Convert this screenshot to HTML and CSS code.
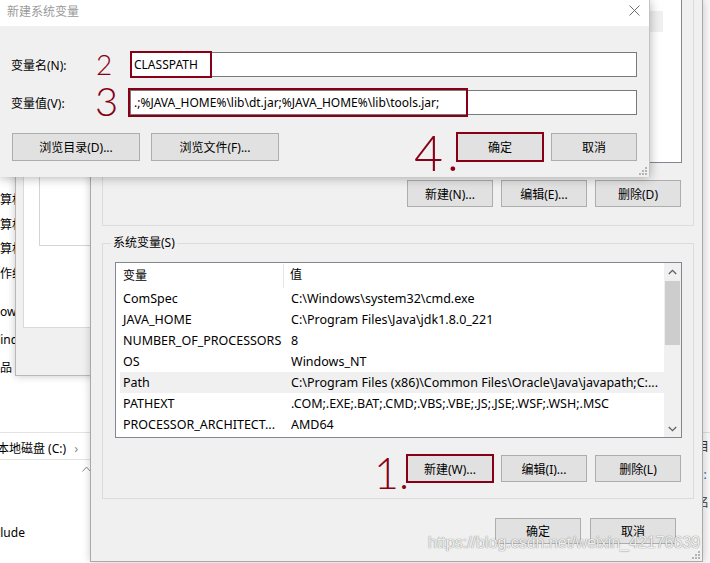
FILE: index.html
```html
<!DOCTYPE html>
<html lang="zh-CN">
<head>
    <meta charset="UTF-8">
    <meta name="viewport" content="width=device-width, initial-scale=1.0">
    <title>新建系统变量</title>
    <link rel="stylesheet" href="styles.css">
</head>
<body>
<div class="desktop">

    <!-- 最底层：系统信息 / 资源管理器 -->
    <div class="win explorer">
        <div class="info">
            <div class="info-row">计算机名:</div>
            <div class="info-row">计算机全名:</div>
            <div class="info-row">计算机描述:</div>
            <div class="info-row">工作组:</div>
        </div>
        <div class="info info-os">
            <div class="info-row cut-wind">Windows 10 家庭中文版</div>
            <div class="info-row cut-w">Windows 已激活</div>
            <div class="info-row">产品 ID:</div>
        </div>
        <div class="crumb">
            <span class="crumb-text">本地磁盘 (C:)</span>
            <span class="crumb-arrow">›</span>
        </div>
        <div class="sort-up">
            <svg width="9" height="6" viewBox="0 0 9 6"><polyline points="0.5,5.5 4.5,1 8.5,5.5" fill="none" stroke="#8a8a8a" stroke-width="1"/></svg>
        </div>
        <div class="file-row">include</div>
    </div>

    <!-- 系统属性 -->
    <div class="win sysprop">
        <div class="sp-panel">
            <div class="sp-box"></div>
        </div>
    </div>

    <!-- 右侧露出的窗口 -->
    <div class="win side">
        <div class="side-line side-top"></div>
        <div class="side-text">目</div>
        <div class="side-text side-blue">|:</div>
        <div class="side-text">名</div>
    </div>

    <!-- 环境变量 -->
    <div class="win envvars">
        <div class="group group-user">
            <div class="list list-user">
                <div class="list-body">
                    <div class="row selected"><span class="cell-name">Path</span><span class="cell-value">%USERPROFILE%\AppData\Local\Microsoft\WindowsApps;</span></div>
                    <div class="row"><span class="cell-name">TEMP</span><span class="cell-value">%USERPROFILE%\AppData\Local\Temp</span></div>
                    <div class="row"><span class="cell-name">TMP</span><span class="cell-value">%USERPROFILE%\AppData\Local\Temp</span></div>
                </div>
            </div>
            <div class="btn-row">
                <button class="btn">新建(N)...</button>
                <button class="btn">编辑(E)...</button>
                <button class="btn">删除(D)</button>
            </div>
        </div>

        <div class="group group-sys">
            <span class="group-title">系统变量(S)</span>
            <div class="list list-sys">
                <div class="list-body">
                    <div class="list-head">
                        <span class="head-name">变量</span>
                        <span class="head-value">值</span>
                    </div>
                    <div class="row"><span class="cell-name">ComSpec</span><span class="cell-value">C:\Windows\system32\cmd.exe</span></div>
                    <div class="row"><span class="cell-name">JAVA_HOME</span><span class="cell-value">C:\Program Files\Java\jdk1.8.0_221</span></div>
                    <div class="row"><span class="cell-name">NUMBER_OF_PROCESSORS</span><span class="cell-value">8</span></div>
                    <div class="row"><span class="cell-name">OS</span><span class="cell-value">Windows_NT</span></div>
                    <div class="row selected"><span class="cell-name">Path</span><span class="cell-value">C:\Program Files (x86)\Common Files\Oracle\Java\javapath;C:...</span></div>
                    <div class="row"><span class="cell-name">PATHEXT</span><span class="cell-value">.COM;.EXE;.BAT;.CMD;.VBS;.VBE;.JS;.JSE;.WSF;.WSH;.MSC</span></div>
                    <div class="row"><span class="cell-name">PROCESSOR_ARCHITECT...</span><span class="cell-value">AMD64</span></div>
                </div>
                <div class="scrollbar">
                    <div class="sb-btn">
                        <svg width="9" height="6" viewBox="0 0 9 6"><polyline points="0.8,5 4.5,1.3 8.2,5" fill="none" stroke="#606060" stroke-width="1.3"/></svg>
                    </div>
                    <div class="sb-track"><div class="sb-thumb"></div></div>
                    <div class="sb-btn">
                        <svg width="9" height="6" viewBox="0 0 9 6"><polyline points="0.8,1 4.5,4.7 8.2,1" fill="none" stroke="#606060" stroke-width="1.3"/></svg>
                    </div>
                </div>
            </div>
            <div class="btn-row">
                <button class="btn marked">新建(W)...</button>
                <button class="btn">编辑(I)...</button>
                <button class="btn">删除(L)</button>
            </div>
        </div>

        <div class="footer-row">
            <button class="btn btn-footer">确定</button>
            <button class="btn btn-footer">取消</button>
        </div>
        <div class="grip grip-env">
            <svg width="8" height="8" viewBox="0 0 8 8" fill="#b4b4b4"><rect x="6" y="0" width="2" height="2"/><rect x="3" y="3" width="2" height="2"/><rect x="6" y="3" width="2" height="2"/><rect x="0" y="6" width="2" height="2"/><rect x="3" y="6" width="2" height="2"/><rect x="6" y="6" width="2" height="2"/></svg>
        </div>
    </div>

    <!-- 新建系统变量 -->
    <div class="win dialog">
        <div class="titlebar">
            <span class="title">新建系统变量</span>
            <svg class="close" width="11" height="11" viewBox="0 0 11 11"><path d="M0.5 0.5 L10.5 10.5 M10.5 0.5 L0.5 10.5" stroke="#6b6b6b" stroke-width="1"/></svg>
        </div>
        <div class="dialog-body">
            <div class="field">
                <label class="field-label">变量名(N):</label>
                <div class="input">CLASSPATH</div>
            </div>
            <div class="field">
                <label class="field-label">变量值(V):</label>
                <div class="input">.;%JAVA_HOME%\lib\dt.jar;%JAVA_HOME%\lib\tools.jar;</div>
            </div>
            <div class="dialog-buttons">
                <button class="btn btn-browse">浏览目录(D)...</button>
                <button class="btn btn-browse">浏览文件(F)...</button>
                <button class="btn btn-dlg marked ok">确定</button>
                <button class="btn btn-dlg">取消</button>
            </div>
        </div>
        <div class="grip grip-dlg">
            <svg width="8" height="8" viewBox="0 0 8 8" fill="#b4b4b4"><rect x="6" y="0" width="2" height="2"/><rect x="3" y="3" width="2" height="2"/><rect x="6" y="3" width="2" height="2"/><rect x="0" y="6" width="2" height="2"/><rect x="3" y="6" width="2" height="2"/><rect x="6" y="6" width="2" height="2"/></svg>
        </div>
    </div>

    <!-- 红色标注 -->
    <div class="anno-box anno-name"></div>
    <div class="anno-box anno-value"></div>
    <div class="anno anno-2">2</div>
    <div class="anno anno-3">3</div>
    <div class="anno anno-4">4.</div>
    <div class="anno anno-1">1.</div>

    <div class="watermark">https://blog.csdn.net/weixin_42176639</div>
</div>
</body>
</html>
```

FILE: styles.css
```css
* {
    box-sizing: border-box;
}
body {
    margin: 0;
    font-family: "Noto Sans", "Noto Sans CJK SC", sans-serif;
    font-size: 12px;
    color: #000;
}
.desktop {
    position: relative;
    width: 710px;
    height: 563px;
    overflow: hidden;
    background: #fff;
}
.win {
    position: absolute;
}

/* 底层窗口 */
.explorer {
    left: 0;
    top: 0;
    width: 120px;
    height: 563px;
    background: #fff;
}
.info {
    padding-top: 188px;
}
.info-row {
    height: 24.5px;
    line-height: 24.5px;
    white-space: nowrap;
    margin-left: -12px;
}
.info-os {
    padding-top: 12px;
}
.info-os .info-row {
    height: 28px;
    line-height: 28px;
}
.info-row.cut-wind {
    margin-left: -29px;
}
.info-row.cut-w {
    margin-left: -11px;
}
.crumb {
    margin-top: 50px;
    height: 28px;
    width: 95px;
    border-top: 1px solid #e3e3e3;
    border-bottom: 1px solid #e3e3e3;
    display: flex;
    align-items: center;
    padding-top: 3px;
    white-space: nowrap;
}
.crumb-text {
    margin-left: -3px;
}
.crumb-arrow {
    margin-left: 8px;
    color: #8a8a8a;
    font-size: 13px;
}
.sort-up {
    margin: 6px 0 0 82px;
    height: 6px;
    line-height: 0;
}
.file-row {
    margin: 52px 0 0 -16px;
    white-space: nowrap;
}

.sysprop {
    left: 15px;
    top: 0;
    width: 110px;
    height: 376px;
    background: #f0f0f0;
    border: 1px solid #b8b8b8;
    box-shadow: 0 0 8px rgba(0, 0, 0, 0.22);
}
.sp-panel {
    margin-left: 7px;
    height: 327px;
    background: #fff;
    border-left: 1px solid #dadada;
    border-bottom: 1px solid #dadada;
}
.sp-box {
    margin-left: 15px;
    height: 245px;
    border-left: 1px solid #d4d4d4;
    border-bottom: 1px solid #d4d4d4;
}

.side {
    left: 703px;
    top: 0;
    width: 20px;
    height: 563px;
    background: #f7f7f7;
    padding-top: 432px;
}
.side-top {
    height: 1px;
    background: #dcdcdc;
}
.side-text {
    height: 28px;
    line-height: 28px;
    margin-left: -6px;
    color: #333;
    white-space: nowrap;
}
.side-blue {
    color: #2a5db0;
}

/* 环境变量窗口 */
.envvars {
    left: 90px;
    top: 0;
    width: 613px;
    height: 562px;
    background: #f0f0f0;
    border: 1px solid #a9a9a9;
    border-top: 0;
    box-shadow: 0 0 8px rgba(0, 0, 0, 0.2);
    padding: 0 8px 0 11px;
}
.group {
    position: relative;
    border: 1px solid #dcdcdc;
}
.group-user {
    border-top: 0;
    padding: 0 11px 18px 12px;
}
.group-sys {
    margin-top: 17px;
    padding: 18px 11px 16px 12px;
}
.group-title {
    position: absolute;
    top: -8px;
    left: 8px;
    padding: 0 2px;
    line-height: 14px;
    background: #f0f0f0;
}
.list {
    display: flex;
    background: #fff;
    border: 1px solid #828790;
}
.list-user {
    height: 163px;
    border-top: 0;
    padding: 11px 18px 0 0;
}
.list-sys {
    height: 176px;
}
.list-body {
    flex: 1;
    min-width: 0;
}
.list-head {
    display: flex;
    height: 25px;
    line-height: 24px;
}
.head-name {
    width: 168px;
    padding-left: 7px;
    border-right: 1px solid #e5e5e5;
    margin: 1px 0 0;
}
.head-value {
    padding-left: 6px;
}
.row {
    display: flex;
    height: 21px;
    line-height: 21px;
    margin-left: 4px;
    font-size: 12.5px;
    white-space: nowrap;
}
.row.selected {
    background: #f0f0f0;
}
.cell-name {
    width: 171px;
    flex: none;
    padding-left: 3px;
    overflow: hidden;
}
.cell-value {
    flex: 1;
    overflow: hidden;
}
.scrollbar {
    width: 17px;
    flex: none;
    display: flex;
    flex-direction: column;
    background: #f0f0f0;
}
.sb-btn {
    height: 17px;
    display: flex;
    align-items: center;
    justify-content: center;
}
.sb-track {
    flex: 1;
}
.sb-thumb {
    margin: 1px 1px 0;
    height: 64px;
    background: #cdcdcd;
}
.btn-row {
    display: flex;
    justify-content: flex-end;
    gap: 8px;
    margin-top: 17px;
    padding-right: 1px;
}
.btn {
    width: 86px;
    height: 27px;
    padding: 0;
    border: 1px solid #adadad;
    background: #e1e1e1;
    font-family: inherit;
    font-size: 12px;
    color: #000;
}
.btn.marked {
    outline: 2px solid #880015;
    outline-offset: -1px;
}
.footer-row {
    display: flex;
    justify-content: flex-end;
    gap: 9px;
    margin-top: 19px;
    padding-right: 18px;
}
.btn-footer {
    height: 26px;
}
.grip {
    position: absolute;
    right: 2px;
    bottom: 2px;
    line-height: 0;
}

/* 新建系统变量对话框 */
.dialog {
    left: 0;
    top: 0;
    width: 650px;
    height: 177px;
    background: #f0f0f0;
    border-right: 1px solid #c4c4c4;
    box-shadow: 0 1px 10px rgba(0, 0, 0, 0.3);
}
.titlebar {
    height: 26px;
    background: #fff;
    display: flex;
    justify-content: space-between;
    align-items: center;
    padding: 0 9px 5px 7px;
}
.title {
    color: #9a9a9a;
}
.dialog-body {
    padding: 26px 12px 0 11px;
}
.field {
    display: flex;
    align-items: center;
}
.field + .field {
    margin-top: 13px;
}
.field-label {
    width: 119px;
    flex: none;
}
.input {
    flex: 1;
    height: 25px;
    line-height: 23px;
    padding-left: 3px;
    background: #fff;
    border: 1px solid #7a7a7a;
    white-space: nowrap;
    overflow: hidden;
}
.dialog-buttons {
    display: flex;
    gap: 11px;
    margin-top: 18px;
    padding-left: 1px;
}
.btn-browse {
    width: 128px;
    height: 28px;
}
.btn-dlg {
    height: 28px;
}
.btn-dlg.ok {
    margin-left: auto;
    margin-right: -3px;
}

/* 标注 */
.anno-box {
    position: absolute;
    border: 2px solid #880015;
}
.anno-name {
    left: 130px;
    top: 51px;
    width: 82px;
    height: 27px;
}
.anno-value {
    left: 128px;
    top: 88px;
    width: 340px;
    height: 29px;
}
.anno {
    position: absolute;
    font-family: Lato, "DejaVu Sans", sans-serif;
    font-weight: 300;
    line-height: 1;
    color: #880015;
}
.anno-2 {
    left: 96px;
    top: 50px;
    font-size: 28px;
}
.anno-3 {
    left: 95px;
    top: 81px;
    font-size: 40px;
}
.anno-4 {
    left: 414px;
    top: 127px;
    font-size: 50px;
    letter-spacing: 4px;
}
.anno-1 {
    left: 374px;
    top: 451px;
    font-size: 43px;
}
.watermark {
    position: absolute;
    left: 428px;
    top: 534px;
    font-family: "Liberation Sans", Arial, sans-serif;
    font-size: 16px;
    color: rgba(255, 255, 255, 0.9);
    text-shadow: 0 0 1px rgba(90, 90, 90, 0.6), 0 0 1px rgba(90, 90, 90, 0.6);
    white-space: nowrap;
}
```
